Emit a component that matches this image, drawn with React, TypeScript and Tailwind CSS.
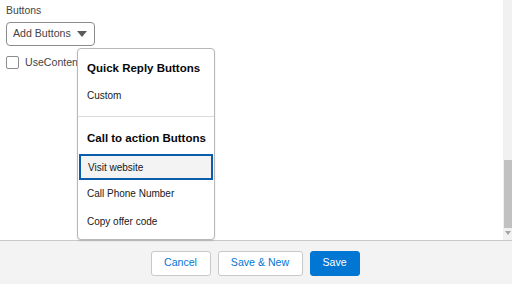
import React from "react";

export default function App() {
  const font = { fontFamily: '"Liberation Sans", Arial, sans-serif' };
  return (
    <div className="w-[512px] h-[284px] flex flex-col bg-white overflow-hidden relative" style={font}>
      <div className="h-[240px] flex">
        <div className="flex-1 flex flex-col pl-[6px] pt-[4px]">
          <div className="text-[10.4px] leading-[14px] text-[#444444]">Buttons</div>
          <div className="mt-[4px] w-[89px] h-[24px] border border-[#8c8c8c] rounded-[4px] flex items-center pl-[6px] pr-[6px] justify-between">
            <span className="text-[10.6px] text-[#444444]">Add Buttons</span>
            <svg width="10" height="6" viewBox="0 0 10 6" className="mr-[1px]">
              <path d="M0 0 L10 0 L5 6 Z" fill="#5c5c5c" />
            </svg>
          </div>
          <div className="mt-[9px] flex items-center gap-[6px]">
            <div className="w-[13px] h-[13px] border border-[#8c8c8c] rounded-[2px] bg-white" />
            <span className="text-[10.6px] text-[#444444]">UseContentTemplate</span>
          </div>
        </div>
        <div className="w-[9px] h-full bg-[#f1f1f1] flex flex-col items-end">
          <div className="mt-[160px] w-[8px] h-[68px] bg-[#c1c1c1]" />
          <svg width="8" height="5" viewBox="0 0 8 5" className="mt-[3px]">
            <path d="M1 0 L7 0 L4 4 Z" fill="#a3a3a3" />
          </svg>
        </div>
      </div>

      <div className="absolute left-[77px] top-[48px] w-[138px] h-[192px] bg-white border border-[#b8b8b8] rounded-[4px] shadow-[0_1px_2px_rgba(0,0,0,0.12)] flex flex-col">
        <div className="h-[33px] pt-[12px] pl-[9px] text-[11.5px] leading-[14px] font-bold text-[#080707]">Quick Reply Buttons</div>
        <div className="h-[27px] flex items-center pl-[9px] text-[10px] text-[#181818]">Custom</div>
        <div className="mt-[7px] h-px bg-[#dddbda]" />
        <div className="h-[37px] pt-[14px] pl-[9px] text-[11.5px] leading-[14px] font-bold text-[#080707]">Call to action Buttons</div>
        <div className="mx-[1px] h-[26px] flex items-center pl-[7px] text-[10px] text-[#181818] bg-[#f3f3f3] border-2 border-[#0b5cab]">Visit website</div>
        <div className="h-[27px] flex items-center pl-[9px] text-[10px] text-[#181818]">Call Phone Number</div>
        <div className="h-[28px] flex items-center pl-[9px] text-[10px] text-[#181818]">Copy offer code</div>
      </div>

      <div className="h-[44px] border-t border-[#c9c9c9] bg-[#f3f3f3] flex items-center justify-center gap-[7px] pt-[1px] pr-[2px]">
        <button className="w-[60px] h-[25px] border border-[#c9c9c9] rounded-[3px] bg-white text-[10.6px] text-[#0176d3]">Cancel</button>
        <button className="w-[85px] h-[25px] border border-[#c9c9c9] rounded-[3px] bg-white text-[10.6px] text-[#0176d3]">Save &amp; New</button>
        <button className="w-[50px] h-[25px] border border-[#0176d3] rounded-[3px] bg-[#0176d3] text-[10.6px] text-white">Save</button>
      </div>
    </div>
  );
}
